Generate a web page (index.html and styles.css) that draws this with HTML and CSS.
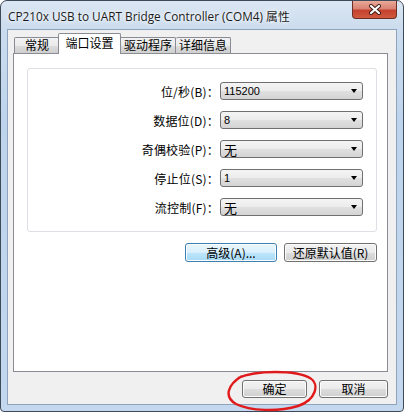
FILE: index.html
```html
<!DOCTYPE html>
<html>
<head>
<meta charset="utf-8">
<link rel="stylesheet" href="styles.css">
</head>
<body>
<div class="window">
  <div class="titlebar">
    <span class="title">CP210x USB to UART Bridge Controller (COM4) 属性</span>
    <div class="close">
      <svg width="14" height="11" viewBox="0 0 14 11"><path d="M3 2 L11 9 M11 2 L3 9" stroke="#3a1a14" stroke-width="4" stroke-linecap="round"/><path d="M3 2 L11 9 M11 2 L3 9" stroke="#ffffff" stroke-width="2.2" stroke-linecap="round"/></svg>
    </div>
  </div>
  <div class="client">
    <div class="tabs">
      <div class="tab t1">常规</div>
      <div class="tab sel">端口设置</div>
      <div class="tab t3">驱动程序</div>
      <div class="tab t4">详细信息</div>
    </div>
    <div class="panel">
      <div class="group">
        <div class="row"><span class="label">位/秒(B)：</span><div class="combo"><span class="val">115200</span><span class="arrow"></span></div></div>
        <div class="row"><span class="label">数据位(D)：</span><div class="combo"><span class="val">8</span><span class="arrow"></span></div></div>
        <div class="row"><span class="label">奇偶校验(P)：</span><div class="combo"><span class="val cjk">无</span><span class="arrow"></span></div></div>
        <div class="row"><span class="label">停止位(S)：</span><div class="combo"><span class="val">1</span><span class="arrow"></span></div></div>
        <div class="row"><span class="label">流控制(F)：</span><div class="combo"><span class="val cjk">无</span><span class="arrow"></span></div></div>
      </div>
      <div class="panel-buttons">
        <div class="btn focus adv">高级(A)...</div>
        <div class="btn restore">还原默认值(R)</div>
      </div>
    </div>
    <div class="dlg-buttons">
      <div class="btn ok">确定</div>
      <div class="btn cancel">取消</div>
    </div>
  </div>
  <svg class="mark" width="94" height="42" viewBox="0 0 94 42"><path d="M12 8 C30 0 70 0 84 8 C94 14 90 30 72 36 C52 42 24 41 10 34 C-2 27 1 15 16 6" fill="none" stroke="#e0191b" stroke-width="2.4"/></svg>
</div>
</body>
</html>
```
FILE: styles.css
```css
html, body { margin: 0; padding: 0; background: #ffffff; }
body { width: 404px; height: 412px; overflow: hidden; }

.window {
  position: relative;
  width: 404px;
  height: 412px;
  box-sizing: border-box;
  border: 1px solid #3d4a59;
  border-radius: 7px 7px 4px 4px;
  background: linear-gradient(180deg, #dbe6f2 0px, #cbdcee 28px, #bed4ec 120px, #c3d8ee 100%);
  display: flex;
  flex-direction: column;
  font-family: "Noto Sans CJK SC", sans-serif;
}

.titlebar {
  height: 28px;
  display: flex;
  align-items: flex-start;
  padding: 0 6px 0 7px;
}
.title {
  margin-top: 6px;
  font-family: "Open Sans", "Noto Sans CJK SC", sans-serif;
  font-size: 11.8px;
  color: #1b1b1b;
  white-space: nowrap;
  text-shadow: 0 0 6px #ffffff, 0 0 3px #ffffff;
}
.close {
  margin-left: auto;
  width: 45px;
  height: 18px;
  box-sizing: border-box;
  border: 1px solid #6d2f25;
  border-top: none;
  border-radius: 0 0 4px 4px;
  background: linear-gradient(180deg, #e9a99a 0%, #d98373 45%, #c5412f 55%, #cf5a3e 100%);
  display: flex;
  align-items: center;
  justify-content: center;
}

.client {
  flex: 1;
  margin: 0 6px 6px 6px;
  border: 1px solid #8ea4be;
  background: #f0f0f0;
  padding: 3px 8px 6px 5px;
  display: flex;
  flex-direction: column;
}

.tabs {
  display: flex;
  align-items: flex-end;
  height: 20px;
  padding-left: 1px;
  position: relative;
  z-index: 1;
}
.tab {
  box-sizing: border-box;
  height: 16px;
  border: 1px solid #898c95;
  border-bottom: none;
  border-left: none;
  background: linear-gradient(180deg, #f2f2f2 0%, #ebebeb 50%, #dddddd 51%, #cfcfcf 100%);
  font-size: 12px;
  line-height: 14px;
  color: #000;
  text-align: center;
  border-radius: 2px 2px 0 0;
}
.t1 { width: 46px; border-left: 1px solid #898c95; }
.t3 { width: 55px; }
.t4 { width: 55px; }
.tab.sel {
  width: 63px;
  height: 21px;
  margin: 0 -2px -1px -2px;
  border-left: 1px solid #898c95;
  background: #ffffff;
  line-height: 18px;
  position: relative;
  z-index: 2;
}
.t3 { padding-left: 2px; width: 57px; }

.panel {
  height: 319px;
  box-sizing: border-box;
  border: 1px solid #898c95;
  background: #ffffff;
  padding: 14px 10px 0 13px;
  display: flex;
  flex-direction: column;
}

.group {
  width: 350px;
  height: 164px;
  box-sizing: border-box;
  border: 1px solid #dcdfe3;
  border-radius: 3px;
  padding: 13px 13px 0 0;
  display: flex;
  flex-direction: column;
  gap: 11px;
}
.row {
  display: flex;
  justify-content: flex-end;
  align-items: center;
  height: 18px;
}
.label {
  font-size: 12px;
  color: #000;
  margin-right: 1px;
  letter-spacing: 0.2px;
}
.combo {
  width: 143px;
  height: 18px;
  box-sizing: border-box;
  border: 1px solid #707070;
  border-radius: 3px;
  background: linear-gradient(180deg, #f4f4f4 0%, #ececec 50%, #e0e0e0 51%, #d4d4d4 100%);
  display: flex;
  align-items: center;
  padding: 0 5px 0 3px;
}
.val {
  flex: 1;
  font-family: "Liberation Sans", sans-serif;
  font-size: 11px;
  color: #000;
}
.val.cjk { font-family: "Noto Sans CJK SC", sans-serif; font-size: 13px; }
.arrow {
  width: 0;
  height: 0;
  border-left: 3.5px solid transparent;
  border-right: 3.5px solid transparent;
  border-top: 4px solid #000;
}

.panel-buttons {
  display: flex;
  justify-content: flex-end;
  gap: 7px;
  margin-top: 11px;
  width: 350px;
}
.btn {
  box-sizing: border-box;
  height: 19px;
  border: 1px solid #707070;
  border-radius: 3px;
  background: linear-gradient(180deg, #f2f2f2 0%, #ebebeb 50%, #dddddd 51%, #cfcfcf 100%);
  font-size: 12px;
  line-height: 17px;
  text-align: center;
  color: #000;
  box-shadow: inset 0 0 0 1px #fcfcfc;
}
.btn.focus {
  border-color: #3c7fb1;
  background: linear-gradient(180deg, #eaf6fd 0%, #d9f0fc 50%, #bee6fd 51%, #a7d9f5 100%);
}
.adv { width: 92px; }
.restore { width: 93px; }

.dlg-buttons {
  display: flex;
  justify-content: flex-end;
  gap: 12px;
  margin-top: 8px;
}
.ok { width: 65px; height: 18px; line-height: 16px; }
.cancel { width: 69px; height: 18px; line-height: 16px; }

.mark {
  position: absolute;
  left: 225px;
  top: 369px;
}
```
